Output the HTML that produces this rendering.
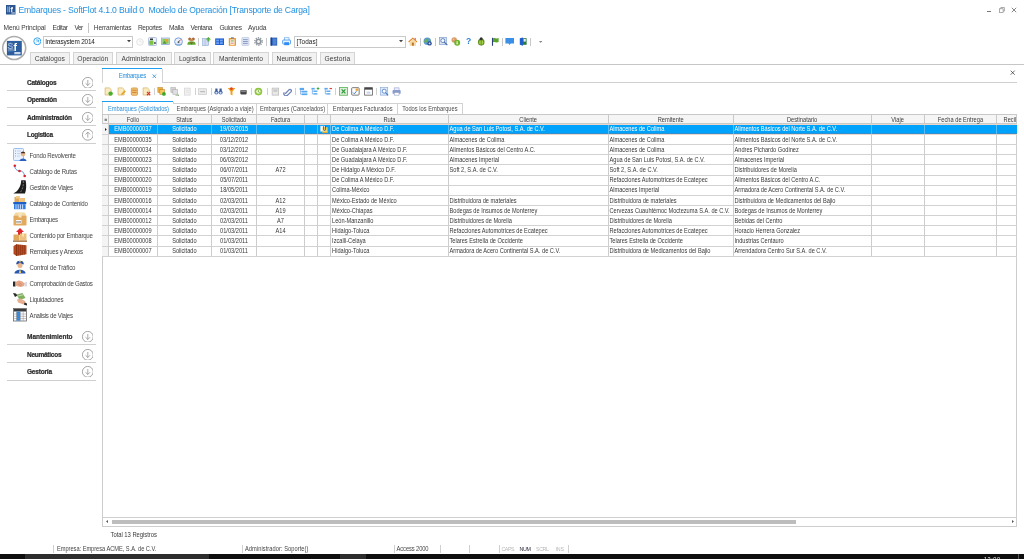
<!DOCTYPE html>
<html lang="es"><head><meta charset="utf-8"><title>Embarques - SoftFlot</title><style>
html,body{margin:0;padding:0;background:#fff;}
body{width:1024px;height:559px;position:relative;overflow:hidden;font-family:"Liberation Sans",sans-serif;}
#app{position:absolute;left:0;top:0;width:1024px;height:559px;overflow:hidden;will-change:transform;}
.t{position:absolute;white-space:pre;}
.r{position:absolute;display:block;}
.gb{-webkit-text-stroke:0.22px #2e2e2e;}
</style></head><body>
<div id="app">
<svg class="r" style="left:6.00px;top:5.00px" width="9.5" height="9.5" viewBox="0 0 9.5 9.5"><rect width="9.500" height="9.500" fill="#2a5590"/><path d="M1.300 1.600h1.100v5.600h-1.100zM3 1.600h1v5.600h-1z" fill="#b7c7e0" opacity=".8"/><text x="4.500" y="6.900" font-family="Liberation Sans, sans-serif" font-weight="bold" font-size="7.400" fill="#fff">f</text><rect x="5.300" y="7.300" width="3.600" height="1.400" fill="#aabbd8"/></svg>
<span class="t " style="left:18.50px;top:5.24px;font-size:8.60px;line-height:10.32px;color:#2291e0;letter-spacing:-0.173px;">Embarques - SoftFlot 4.1.0 Build 0  Modelo de Operación [Transporte de Carga]</span>
<div class="r" style="left:986.50px;top:11.20px;width:4.00px;height:0.80px;background:#777;"></div>
<svg class="r" style="left:998.50px;top:7.00px" width="6" height="6" viewBox="0 0 6 6"><rect x="0.5" y="1.8" width="3.6" height="3.6" fill="none" stroke="#888" stroke-width=".7"/><path d="M1.8 1.8V.5H5.4V4.1H4.1" fill="none" stroke="#888" stroke-width=".7"/></svg>
<svg class="r" style="left:1010.50px;top:7.00px" width="6" height="6" viewBox="0 0 6 6"><path d="M.8 .8L5.2 5.2M5.2 .8L.8 5.2" stroke="#666" stroke-width=".8"/></svg>
<span class="t " style="left:3.50px;top:24.24px;font-size:6.60px;line-height:7.92px;color:#3a3a3a;letter-spacing:-0.104px;">Menú Principal</span>
<span class="t " style="left:52.50px;top:24.24px;font-size:6.60px;line-height:7.92px;color:#3a3a3a;letter-spacing:-0.348px;">Editar</span>
<span class="t " style="left:74.50px;top:24.24px;font-size:6.60px;line-height:7.92px;color:#3a3a3a;letter-spacing:-0.600px;">Ver</span>
<span class="t " style="left:93.80px;top:24.24px;font-size:6.60px;line-height:7.92px;color:#3a3a3a;letter-spacing:-0.174px;">Herramientas</span>
<span class="t " style="left:138.00px;top:24.24px;font-size:6.60px;line-height:7.92px;color:#3a3a3a;letter-spacing:-0.397px;">Reportes</span>
<span class="t " style="left:169.00px;top:24.24px;font-size:6.60px;line-height:7.92px;color:#3a3a3a;letter-spacing:-0.193px;">Malla</span>
<span class="t " style="left:190.50px;top:24.24px;font-size:6.60px;line-height:7.92px;color:#3a3a3a;letter-spacing:-0.371px;">Ventana</span>
<span class="t " style="left:219.50px;top:24.24px;font-size:6.60px;line-height:7.92px;color:#3a3a3a;letter-spacing:-0.347px;">Guiones</span>
<span class="t " style="left:248.00px;top:24.24px;font-size:6.60px;line-height:7.92px;color:#3a3a3a;letter-spacing:-0.024px;">Ayuda</span>
<div class="r" style="left:88.20px;top:22.50px;width:0.70px;height:10.00px;background:#c4c4c4;"></div>
<svg class="r" style="left:1.00px;top:35.00px" width="27" height="26" viewBox="0 0 27 26"><circle cx="13.2" cy="13" r="11.500" fill="#fff" stroke="#adadad" stroke-width="1.600"/><rect x="5.900" y="5.900" width="14.900" height="14.500" fill="#2b5d9f"/><text x="6.400" y="14.200" font-family="Liberation Sans, sans-serif" font-size="8.600" fill="none" stroke="#b9cbe6" stroke-width=".45">S</text><path d="M7 14.800l5.800-.6M7 15.900l6-.3" stroke="#b9cbe6" stroke-width=".5"/><text x="12.600" y="15.600" font-family="Liberation Sans, sans-serif" font-weight="bold" font-size="10.500" fill="#fff">f</text><rect x="13.300" y="17" width="6.200" height="2.300" rx=".4" fill="#c9d6ea"/></svg>
<svg class="r" style="left:32.50px;top:37.20px" width="8.6" height="8.6" viewBox="0 0 8.6 8.6"><circle cx="4.3" cy="4.3" r="3.5" fill="#fff" stroke="#35a7f2" stroke-width="1"/><path d="M3 3h2.6v2.4M5.4 3.2L3.2 5.4" stroke="#35a7f2" stroke-width=".8" fill="none"/></svg>
<div class="r" style="left:43.00px;top:35.50px;width:90.00px;height:12.00px;background:#fff;box-sizing:border-box;border:0.8px solid #c9c9c9;"></div>
<span class="t " style="left:45.20px;top:37.56px;font-size:6.40px;line-height:7.68px;color:#222;letter-spacing:-0.178px;">Interasystem 2014</span>
<svg class="r" style="left:126.50px;top:40.40px" width="4" height="2.5" viewBox="0 0 4 2.5"><path d="M0 0h4L2 2.2z" fill="#444"/></svg>
<svg class="r" style="left:136.00px;top:37.50px" width="8" height="8" viewBox="0 0 8 8"><circle cx="4" cy="4" r="3.3" fill="#fbfbfb" stroke="#dcdcdc" stroke-width=".8"/><path d="M3 3h2v2" stroke="#ddd" stroke-width=".6" fill="none"/></svg>
<svg class="r" style="left:148.00px;top:37.00px" width="9" height="9" viewBox="0 0 9 9"><rect x=".5" y=".5" width="8" height="8" rx="1" fill="#eef3fb" stroke="#9ab0d6" stroke-width=".7"/><rect x="1.2" y="3.6" width="4.2" height="4.2" fill="#7cc344"/><rect x="2" y="1.5" width="3" height="1.6" fill="#333"/><rect x="6.3" y="5" width="1.3" height="2" fill="#333"/></svg>
<svg class="r" style="left:160.80px;top:37.00px" width="9" height="9" viewBox="0 0 9 9"><rect x=".4" y="1" width="8.2" height="6.6" fill="#dfe9f8" stroke="#7f9fd0" stroke-width=".7"/><rect x="1.3" y="1.9" width="6.4" height="4.8" fill="#8ec85a"/><circle cx="5.8" cy="3.4" r="1.3" fill="#f0a030"/><path d="M1.3 6.7L3.6 4l2 2.7z" fill="#4f9a3a"/></svg>
<svg class="r" style="left:173.80px;top:37.00px" width="9" height="9" viewBox="0 0 9 9"><circle cx="4.5" cy="4.7" r="3.9" fill="#e8f0fb" stroke="#6a9ad8" stroke-width=".9"/><path d="M4.5 5L6.6 2.6" stroke="#c33" stroke-width=".9"/><circle cx="4.5" cy="5.2" r=".9" fill="#555"/><path d="M1.6 7.3h5.8" stroke="#6a9ad8" stroke-width=".8"/></svg>
<svg class="r" style="left:186.50px;top:37.00px" width="9" height="9" viewBox="0 0 9 9"><circle cx="2.7" cy="2" r="1.5" fill="#a8683a"/><circle cx="6.3" cy="2" r="1.5" fill="#a8683a"/><circle cx="4.5" cy="3" r="1.6" fill="#c98a55"/><path d="M.3 7.8c0-2.4 1.4-3.4 2.4-3.4h3.6c1 0 2.4 1 2.4 3.4z" fill="#5cab2e"/><path d="M3 5.2l1.5 2.6L6 5.2z" fill="#8b5a33"/></svg>
<div class="r" style="left:198.40px;top:37.50px;width:0.70px;height:8.50px;background:#c8c8c8;"></div>
<svg class="r" style="left:202.00px;top:37.00px" width="9.5" height="9" viewBox="0 0 9.5 9"><rect x=".6" y="1.6" width="6" height="7" fill="#cfdcf2" stroke="#8fa8d4" stroke-width=".6"/><path d="M3.2 1.6v7" stroke="#a9bde0" stroke-width=".6"/><path d="M6.4 0l2.6 2.4H7.4v2H5.4v-2H3.8z" fill="#53b038"/></svg>
<svg class="r" style="left:215.00px;top:37.00px" width="9.2" height="9" viewBox="0 0 9.2 9"><rect x=".2" y="1.4" width="8.8" height="6.6" fill="#1f5fd0"/><rect x="1.2" y="2.6" width="2.8" height="1.8" fill="#6fa4f5"/><rect x="5" y="2.6" width="2.8" height="1.8" fill="#6fa4f5"/><rect x="1.2" y="5.2" width="2.8" height="1.8" fill="#6fa4f5"/><rect x="5" y="5.2" width="2.8" height="1.8" fill="#6fa4f5"/></svg>
<svg class="r" style="left:228.00px;top:37.00px" width="8.8" height="9" viewBox="0 0 8.8 9"><rect x=".8" y="1" width="7.2" height="7.8" rx=".6" fill="#e79a33"/><rect x="2.300" y="2.400" width="4.200" height="5.400" fill="#fff"/><rect x="3" y=".2" width="2.8" height="1.8" fill="#8a8a8a"/><path d="M3 3.4h2.8M3 4.8h2.8" stroke="#5a9a40" stroke-width=".6"/><path d="M3 6.3h2.8" stroke="#c44" stroke-width=".6"/></svg>
<svg class="r" style="left:241.00px;top:37.00px" width="8.8" height="9" viewBox="0 0 8.8 9"><rect x=".8" y=".5" width="7.2" height="8" rx="1" fill="#dfe6f4" stroke="#b3c0dc" stroke-width=".6"/><path d="M2 2.600h4.800M2 4.500h4.800M2 6.400h4.800" stroke="#8394bd" stroke-width=".9"/></svg>
<svg class="r" style="left:253.50px;top:37.00px" width="9" height="9" viewBox="0 0 9 9"><circle cx="4.5" cy="4.5" r="3.1" fill="#8d949c"/><circle cx="4.5" cy="4.5" r="3.8" fill="none" stroke="#8d949c" stroke-width="1.2" stroke-dasharray="1.3 1.1"/><circle cx="4.5" cy="4.5" r="1.5" fill="#f4f4f4"/></svg>
<div class="r" style="left:266.00px;top:37.50px;width:0.70px;height:8.50px;background:#c8c8c8;"></div>
<svg class="r" style="left:270.00px;top:37.00px" width="8" height="9" viewBox="0 0 8 9"><rect x=".6" y=".6" width="6.6" height="8" fill="#2f63b8"/><rect x=".6" y=".6" width="1.4" height="8" fill="#1c3f85"/><rect x="2.8" y="1.6" width="3.6" height="6" fill="#4f83d8"/></svg>
<svg class="r" style="left:282.00px;top:37.00px" width="9.2" height="9" viewBox="0 0 9.2 9"><rect x="2.400" y=".8" width="4.600" height="2.600" fill="#fff" stroke="#4a98ea" stroke-width=".6"/><rect x=".6" y="3" width="8" height="4" rx=".9" fill="#e6f1fd" stroke="#3b8fe8" stroke-width=".8"/><rect x="2.200" y="5.200" width="4.800" height="3" fill="#2f8cf0"/></svg>
<div class="r" style="left:294.00px;top:35.50px;width:111.50px;height:12.00px;background:#fff;box-sizing:border-box;border:0.8px solid #c9c9c9;"></div>
<span class="t " style="left:296.50px;top:37.56px;font-size:6.40px;line-height:7.68px;color:#222;letter-spacing:0.061px;">[Todas]</span>
<svg class="r" style="left:399.30px;top:40.40px" width="4" height="2.5" viewBox="0 0 4 2.5"><path d="M0 0h4L2 2.2z" fill="#444"/></svg>
<svg class="r" style="left:407.50px;top:37.00px" width="9.6" height="9" viewBox="0 0 9.6 9"><path d="M.2 4.6L4.8.5l4.6 4.1-.8.8L4.8 2 1 5.4z" fill="#e8801c"/><path d="M1.6 4.8L4.8 2l3.2 2.8v3.9H1.6z" fill="#f6d9a8"/><rect x="3.9" y="5.6" width="1.9" height="3.1" fill="#b7722c"/><rect x="6.6" y=".9" width="1.2" height="2" fill="#c66"/></svg>
<div class="r" style="left:419.80px;top:37.50px;width:0.70px;height:8.50px;background:#c8c8c8;"></div>
<svg class="r" style="left:423.00px;top:37.00px" width="9.5" height="9" viewBox="0 0 9.5 9"><circle cx="4.3" cy="4.2" r="3.7" fill="#5b97d6"/><path d="M2 2.5c1-.8 2.3-.2 2.5.8s-1 1.4-1.3 2.4S1.7 6 1.2 5" fill="#6ab344"/><path d="M5.5 1.3c1 .4 2 1.3 2.2 2.6-.8.2-1.6-.4-1.9-1.2z" fill="#6ab344"/><circle cx="6.6" cy="6.4" r="2.2" fill="#2b4f8f"/><path d="M5.6 6.4h2M6.6 5.4v2" stroke="#fff" stroke-width=".6"/></svg>
<div class="r" style="left:435.30px;top:37.50px;width:0.70px;height:8.50px;background:#c8c8c8;"></div>
<svg class="r" style="left:439.00px;top:37.00px" width="9" height="9" viewBox="0 0 9 9"><rect x=".5" y=".6" width="6.8" height="6.8" fill="#dbe6f6" stroke="#7f9fd0" stroke-width=".7"/><circle cx="3.8" cy="3.6" r="2" fill="#f4f8ff" stroke="#4a6ea8" stroke-width=".8"/><path d="M5.3 5.2l3 3" stroke="#4a6ea8" stroke-width="1.2"/></svg>
<svg class="r" style="left:451.00px;top:37.00px" width="9.6" height="9" viewBox="0 0 9.6 9"><circle cx="3.2" cy="3" r="2.7" fill="#d89a6a"/><circle cx="2.6" cy="2.4" r=".8" fill="#f0c39a"/><circle cx="6.2" cy="5.8" r="3" fill="#6fb52c"/><path d="M6.2 4.2v3.2M5.3 5h1.6M5.3 6.6h1.8" stroke="#fff" stroke-width=".6"/></svg>
<span class="t " style="left:466.00px;top:36.44px;font-size:8.60px;line-height:10.32px;color:#2f7fd6;font-weight:bold;">?</span>
<svg class="r" style="left:477.00px;top:37.00px" width="8.5" height="9" viewBox="0 0 8.5 9"><ellipse cx="4.2" cy="5" rx="3.3" ry="3.6" fill="#5f8f1e"/><ellipse cx="4.2" cy="5.4" rx="2.1" ry="2.4" fill="#a6d34a"/><circle cx="4.2" cy="1.7" r="1.5" fill="#333"/><path d="M4.2 2.8v5.6" stroke="#3e5f12" stroke-width=".6"/></svg>
<svg class="r" style="left:490.50px;top:37.00px" width="8" height="9" viewBox="0 0 8 9"><path d="M1.5.8v8" stroke="#2c3f7a" stroke-width="1.1"/><path d="M2 1.2c2-.9 3.200 1 5.600-.2v4c-2.400 1.200-3.600-.7-5.600.2z" fill="#5aa32a"/></svg>
<div class="r" style="left:502.00px;top:37.50px;width:0.70px;height:8.50px;background:#c8c8c8;"></div>
<svg class="r" style="left:505.30px;top:37.00px" width="9.4" height="9" viewBox="0 0 9.4 9"><path d="M.4 1h8.600v5.400H5.600L4.600 7.900 3.600 6.400H.4z" fill="#3b8fe6"/></svg>
<svg class="r" style="left:518.50px;top:37.00px" width="8" height="9" viewBox="0 0 8 9"><path d="M.8 1.200L4 0.400v8.400L.8 7.800z" fill="#1f5fc8"/><rect x="4" y="1.200" width="3.600" height="6.600" fill="#2b7a3a"/><rect x="4.600" y="2" width="2.200" height="2.600" fill="#e9f1fb"/></svg>
<div class="r" style="left:530.40px;top:37.50px;width:0.70px;height:8.50px;background:#c8c8c8;"></div>
<svg class="r" style="left:539.20px;top:40.60px" width="3.2" height="2.2" viewBox="0 0 3.2 2.2"><path d="M0 0h3.200L1.600 2z" fill="#8a8a8a"/></svg>
<div class="r" style="left:29.50px;top:52.00px;width:40.50px;height:12.40px;background:#f2f2f2;box-sizing:border-box;border:0.9px solid #d4d4d4;border-bottom:none;"></div>
<span class="t " style="left:34.66px;top:54.88px;font-size:6.70px;line-height:8.04px;color:#3f3f3f;">Catálogos</span>
<div class="r" style="left:72.50px;top:52.00px;width:40.50px;height:12.40px;background:#f2f2f2;box-sizing:border-box;border:0.9px solid #d4d4d4;border-bottom:none;"></div>
<span class="t " style="left:77.29px;top:54.88px;font-size:6.70px;line-height:8.04px;color:#3f3f3f;">Operación</span>
<div class="r" style="left:115.50px;top:52.00px;width:56.00px;height:12.40px;background:#f2f2f2;box-sizing:border-box;border:0.9px solid #d4d4d4;border-bottom:none;"></div>
<span class="t " style="left:121.53px;top:54.88px;font-size:6.70px;line-height:8.04px;color:#3f3f3f;">Administración</span>
<div class="r" style="left:173.80px;top:52.00px;width:37.00px;height:12.40px;background:#f2f2f2;box-sizing:border-box;border:0.9px solid #d4d4d4;border-bottom:none;"></div>
<span class="t " style="left:178.89px;top:54.88px;font-size:6.70px;line-height:8.04px;color:#3f3f3f;">Logística</span>
<div class="r" style="left:213.00px;top:52.00px;width:56.00px;height:12.40px;background:#f2f2f2;box-sizing:border-box;border:0.9px solid #d4d4d4;border-bottom:none;"></div>
<span class="t " style="left:219.03px;top:54.88px;font-size:6.70px;line-height:8.04px;color:#3f3f3f;">Mantenimiento</span>
<div class="r" style="left:271.50px;top:52.00px;width:45.50px;height:12.40px;background:#f2f2f2;box-sizing:border-box;border:0.9px solid #d4d4d4;border-bottom:none;"></div>
<span class="t " style="left:276.56px;top:54.88px;font-size:6.70px;line-height:8.04px;color:#3f3f3f;">Neumáticos</span>
<div class="r" style="left:319.80px;top:52.00px;width:35.20px;height:12.40px;background:#f2f2f2;box-sizing:border-box;border:0.9px solid #d4d4d4;border-bottom:none;"></div>
<span class="t " style="left:324.55px;top:54.88px;font-size:6.70px;line-height:8.04px;color:#3f3f3f;">Gestoría</span>
<div class="r" style="left:0.00px;top:64.00px;width:1024.00px;height:0.80px;background:#c6c6c6;"></div>
<span class="t gb" style="left:27.00px;top:78.80px;font-size:6.50px;line-height:7.80px;color:#2e2e2e;letter-spacing:-0.228px;font-weight:bold;transform:scaleY(1.080);">Catálogos</span>
<svg class="r" style="left:81.70px;top:76.50px" width="11.6" height="11.6" viewBox="0 0 11.6 11.6"><circle cx="5.800" cy="5.800" r="5.400" fill="#fff" stroke="#8e8e8e" stroke-width=".8"/><path d="M5.8 3v5.400M3.500 6.200L5.800 8.500 8.100 6.200" fill="none" stroke="#8e8e8e" stroke-width=".75"/></svg>
<div class="r" style="left:7.00px;top:90.00px;width:88.50px;height:0.80px;background:#cfcfcf;"></div>
<span class="t gb" style="left:27.00px;top:96.30px;font-size:6.50px;line-height:7.80px;color:#2e2e2e;letter-spacing:-0.269px;font-weight:bold;transform:scaleY(1.080);">Operación</span>
<svg class="r" style="left:81.70px;top:94.00px" width="11.6" height="11.6" viewBox="0 0 11.6 11.6"><circle cx="5.800" cy="5.800" r="5.400" fill="#fff" stroke="#8e8e8e" stroke-width=".8"/><path d="M5.8 3v5.400M3.500 6.200L5.800 8.500 8.100 6.200" fill="none" stroke="#8e8e8e" stroke-width=".75"/></svg>
<div class="r" style="left:7.00px;top:107.40px;width:88.50px;height:0.80px;background:#cfcfcf;"></div>
<span class="t gb" style="left:27.00px;top:113.80px;font-size:6.50px;line-height:7.80px;color:#2e2e2e;letter-spacing:-0.178px;font-weight:bold;transform:scaleY(1.080);">Administración</span>
<svg class="r" style="left:81.70px;top:111.50px" width="11.6" height="11.6" viewBox="0 0 11.6 11.6"><circle cx="5.800" cy="5.800" r="5.400" fill="#fff" stroke="#8e8e8e" stroke-width=".8"/><path d="M5.8 3v5.400M3.500 6.200L5.800 8.500 8.100 6.200" fill="none" stroke="#8e8e8e" stroke-width=".75"/></svg>
<div class="r" style="left:7.00px;top:125.00px;width:88.50px;height:0.80px;background:#cfcfcf;"></div>
<span class="t gb" style="left:27.00px;top:131.40px;font-size:6.50px;line-height:7.80px;color:#2e2e2e;letter-spacing:-0.317px;font-weight:bold;transform:scaleY(1.080);">Logistica</span>
<svg class="r" style="left:81.70px;top:129.10px" width="11.6" height="11.6" viewBox="0 0 11.6 11.6"><circle cx="5.800" cy="5.800" r="5.400" fill="#fff" stroke="#8e8e8e" stroke-width=".8"/><path d="M5.800 8.600V3.200M3.500 5.400L5.800 3.100 8.100 5.400" fill="none" stroke="#8e8e8e" stroke-width=".75"/></svg>
<div class="r" style="left:7.00px;top:142.50px;width:88.50px;height:0.80px;background:#cfcfcf;"></div>
<span class="t gb" style="left:27.00px;top:333.20px;font-size:6.50px;line-height:7.80px;color:#2e2e2e;letter-spacing:-0.030px;font-weight:bold;transform:scaleY(1.080);">Mantenimiento</span>
<svg class="r" style="left:81.70px;top:330.90px" width="11.6" height="11.6" viewBox="0 0 11.6 11.6"><circle cx="5.800" cy="5.800" r="5.400" fill="#fff" stroke="#8e8e8e" stroke-width=".8"/><path d="M5.8 3v5.400M3.500 6.200L5.800 8.500 8.100 6.200" fill="none" stroke="#8e8e8e" stroke-width=".75"/></svg>
<div class="r" style="left:7.00px;top:344.40px;width:88.50px;height:0.80px;background:#cfcfcf;"></div>
<span class="t gb" style="left:27.00px;top:350.80px;font-size:6.50px;line-height:7.80px;color:#2e2e2e;letter-spacing:-0.261px;font-weight:bold;transform:scaleY(1.080);">Neumáticos</span>
<svg class="r" style="left:81.70px;top:348.50px" width="11.6" height="11.6" viewBox="0 0 11.6 11.6"><circle cx="5.800" cy="5.800" r="5.400" fill="#fff" stroke="#8e8e8e" stroke-width=".8"/><path d="M5.8 3v5.400M3.500 6.200L5.800 8.500 8.100 6.200" fill="none" stroke="#8e8e8e" stroke-width=".75"/></svg>
<div class="r" style="left:7.00px;top:362.00px;width:88.50px;height:0.80px;background:#cfcfcf;"></div>
<span class="t gb" style="left:27.00px;top:368.20px;font-size:6.50px;line-height:7.80px;color:#2e2e2e;letter-spacing:-0.196px;font-weight:bold;transform:scaleY(1.080);">Gestoría</span>
<svg class="r" style="left:81.70px;top:365.90px" width="11.6" height="11.6" viewBox="0 0 11.6 11.6"><circle cx="5.800" cy="5.800" r="5.400" fill="#fff" stroke="#8e8e8e" stroke-width=".8"/><path d="M5.8 3v5.400M3.500 6.200L5.800 8.500 8.100 6.200" fill="none" stroke="#8e8e8e" stroke-width=".75"/></svg>
<div class="r" style="left:7.00px;top:379.50px;width:88.50px;height:0.80px;background:#cfcfcf;"></div>
<span class="t " style="left:29.60px;top:151.54px;font-size:6.10px;line-height:7.32px;color:#444;letter-spacing:-0.207px;transform:scaleY(1.100);">Fondo Revolvente</span>
<svg class="r" style="left:13.30px;top:147.90px" width="14" height="14" viewBox="0 0 14 14"><rect x=".5" y=".5" width="10" height="12" rx="1" fill="#eaf2ff" stroke="#7fb0f0" stroke-width=".8"/><path d="M2 3h1M2 5.500h1M2 8h1" stroke="#e8a030" stroke-width="1"/><path d="M4 3h4M4 5.500h3M4 8h3" stroke="#b0c4e4" stroke-width=".7"/><circle cx="10" cy="6" r="2.400" fill="#e8b48a"/><path d="M7.800 5.200c0-2 4.400-2 4.400 0z" fill="#3a2a20"/><path d="M6.500 13c0-3.500 7-3.500 7 0z" fill="#2a5fc0"/></svg>
<span class="t " style="left:29.60px;top:167.54px;font-size:6.10px;line-height:7.32px;color:#444;letter-spacing:-0.196px;transform:scaleY(1.100);">Catálogo de Rutas</span>
<svg class="r" style="left:13.30px;top:163.90px" width="14" height="14" viewBox="0 0 14 14"><path d="M1.500 1.500C2 6 5 7 7 7s4 1 4.500 5" fill="none" stroke="#4a90e0" stroke-width="1"/><circle cx="1.800" cy="1.800" r="1.300" fill="#e0202a"/><circle cx="6.500" cy="7" r="1.300" fill="#e0202a"/><circle cx="11.700" cy="12" r="1.300" fill="#e0202a"/></svg>
<span class="t " style="left:29.60px;top:183.54px;font-size:6.10px;line-height:7.32px;color:#444;letter-spacing:-0.269px;transform:scaleY(1.100);">Gestión de Viajes</span>
<svg class="r" style="left:13.30px;top:179.90px" width="14" height="14" viewBox="0 0 14 14"><path d="M.3 13.600C5 11.500 8.200 6 8.200.3h4.400c1 4.500.8 9.500-.6 13.300z" fill="#1c1c1c"/><path d="M10.300 1c.5 4.500-.8 9-3.800 12.400" stroke="#9a9a9a" stroke-width=".7" stroke-dasharray="2 1.200" fill="none"/></svg>
<span class="t " style="left:29.60px;top:199.54px;font-size:6.10px;line-height:7.32px;color:#444;letter-spacing:-0.200px;transform:scaleY(1.100);">Catálogo de Contenido</span>
<svg class="r" style="left:13.30px;top:195.90px" width="14" height="14" viewBox="0 0 14 14"><rect x="1.500" y="1" width="5" height="5" fill="#e0a85a"/><rect x="6.500" y="2" width="5.500" height="4.500" fill="#eec27e"/><rect x="3" y="0" width="4" height="2.500" fill="#f0c98a"/><rect x=".3" y="6" width="13" height="2.200" fill="#1f5fc8"/><rect x="1" y="8.200" width="11.600" height="5" fill="#2f7ae0"/><path d="M3 8.500v4.400M5.200 8.500v4.400M7.400 8.500v4.400M9.600 8.500v4.400" stroke="#d8e8ff" stroke-width=".9"/></svg>
<span class="t " style="left:29.60px;top:215.54px;font-size:6.10px;line-height:7.32px;color:#444;letter-spacing:-0.349px;transform:scaleY(1.100);">Embarques</span>
<svg class="r" style="left:13.30px;top:211.90px" width="14" height="14" viewBox="0 0 14 14"><path d="M.5 3.500L2.500.5h9l2 3z" fill="#f3d9a0"/><rect x=".5" y="3.500" width="13" height="10" rx=".8" fill="#e3aa5e"/><rect x="5.500" y=".5" width="3" height="5" fill="#f6e6c0"/><rect x="3" y="8" width="5.500" height="3.600" fill="#fff"/><path d="M3.800 9v1.800M5 9v1.800M6.200 9v1.800M7.400 9v1.800" stroke="#333" stroke-width=".5"/></svg>
<span class="t " style="left:29.60px;top:231.54px;font-size:6.10px;line-height:7.32px;color:#444;letter-spacing:-0.227px;transform:scaleY(1.100);">Contenido por Embarque</span>
<svg class="r" style="left:13.30px;top:227.90px" width="14" height="14" viewBox="0 0 14 14"><path d="M7 0l4 4H9v3H5V4H3z" fill="#e0262c"/><rect x=".5" y="6.500" width="6" height="6" fill="#e0a85a"/><rect x="7" y="5.500" width="6.500" height="7" fill="#eec27e"/><rect x="9.300" y="5.500" width="1.600" height="3" fill="#f8e8c4"/><path d="M0 12.500h14v1.300H0z" fill="#a06a30"/></svg>
<span class="t " style="left:29.60px;top:247.54px;font-size:6.10px;line-height:7.32px;color:#444;letter-spacing:-0.230px;transform:scaleY(1.100);">Remolques y Anexos</span>
<svg class="r" style="left:13.30px;top:242.90px" width="14" height="14" viewBox="0 0 14 14"><path d="M.5 3L3.500 1.200 13.500 2.200v9L3.500 13 .5 11z" fill="#b8481c"/><path d="M3.500 1.200V13" stroke="#7a2c0e" stroke-width=".7"/><path d="M5.500 1.800v10.600M7.500 2v10.200M9.500 2.200v9.800M11.500 2.300v9.400" stroke="#8c3412" stroke-width=".6"/></svg>
<span class="t " style="left:29.60px;top:263.54px;font-size:6.10px;line-height:7.32px;color:#444;letter-spacing:-0.132px;transform:scaleY(1.100);">Control de Tráfico</span>
<svg class="r" style="left:13.30px;top:259.90px" width="14" height="14" viewBox="0 0 14 14"><path d="M3.500 3c0-3 7-3 7 0l.5 1.200h-8z" fill="#2a4fa0"/><circle cx="7" cy="5.500" r="2.500" fill="#e8b48a"/><path d="M1.500 13.500c0-5 11-5 11 0z" fill="#2a57b0"/><path d="M7 8.500l1.200 4.500H5.800z" fill="#e8d050"/><rect x="6.300" y="1" width="1.400" height="1.400" fill="#f0d040"/></svg>
<span class="t " style="left:29.60px;top:279.54px;font-size:6.10px;line-height:7.32px;color:#444;letter-spacing:-0.275px;transform:scaleY(1.100);">Comprobación de Gastos</span>
<svg class="r" style="left:13.30px;top:275.90px" width="14" height="14" viewBox="0 0 14 14"><path d="M0 5.500h2.500v5H0z" fill="#2a2a2a"/><path d="M2.500 6l3-1.500 3 .5 3.500 2.500-1 2.500-3 1-3-.5-2.500-1z" fill="#e6a888"/><path d="M6 6.500l3 2.500M5 7.800l3 2.200" stroke="#b87858" stroke-width=".5"/><path d="M11.500 6.500l2.500-.8v4.500l-2.500.3z" fill="#d8d8e0"/></svg>
<span class="t " style="left:29.60px;top:295.54px;font-size:6.10px;line-height:7.32px;color:#444;letter-spacing:-0.284px;transform:scaleY(1.100);">Liquidaciones</span>
<svg class="r" style="left:13.30px;top:291.90px" width="14" height="14" viewBox="0 0 14 14"><path d="M0 1l3 .5 1.500 2L2 5z" fill="#2a2a2a"/><path d="M3.500 2.500l6-1.500 3 5-6 2z" fill="#7fb060"/><path d="M5 4l5.500-1.300" stroke="#dfeccf" stroke-width=".7"/><path d="M4 7.500l3.500-1 4.500 2.500 1 3-2.500.5-5.500-2z" fill="#e6b090"/><path d="M11.500 10.500l2.500 1v2l-3-.8z" fill="#2a2a2a"/></svg>
<span class="t " style="left:29.60px;top:311.54px;font-size:6.10px;line-height:7.32px;color:#444;letter-spacing:-0.253px;transform:scaleY(1.100);">Analisis de Viajes</span>
<svg class="r" style="left:13.30px;top:307.90px" width="14" height="14" viewBox="0 0 14 14"><rect x=".5" y=".5" width="13" height="12.500" fill="#fff" stroke="#666" stroke-width=".8"/><rect x=".9" y=".9" width="12.200" height="2.600" fill="#3a3a3a"/><rect x="3.500" y="3.500" width="3.800" height="9.200" fill="#2a8ae8"/><path d="M.9 6h12.200M.9 8.300h12.200M.9 10.600h12.200M3.500 3.500v9.300M7.300 3.500v9.300M10.200 3.500v9.300" stroke="#888" stroke-width=".5" fill="none"/></svg>
<div class="r" style="left:102.40px;top:68.40px;width:59.60px;height:1.10px;background:#1e9ef0;"></div>
<div class="r" style="left:102.40px;top:69.00px;width:0.80px;height:14.00px;background:#d4d4d4;"></div>
<div class="r" style="left:161.60px;top:69.00px;width:0.80px;height:13.60px;background:#d4d4d4;"></div>
<div class="r" style="left:162.00px;top:82.00px;width:855.00px;height:0.80px;background:#cfcfcf;"></div>
<span class="t " style="left:118.80px;top:72.70px;font-size:6.00px;line-height:7.20px;color:#2b8fd8;letter-spacing:-0.398px;transform:scaleY(1.100);">Embarques</span>
<svg class="r" style="left:152.00px;top:73.90px" width="4.6" height="4.6" viewBox="0 0 4.6 4.6"><path d="M.5 .5L4.100 4.100M4.100 .5L.5 4.100" stroke="#2b8fd8" stroke-width=".8"/></svg>
<svg class="r" style="left:1010.30px;top:69.70px" width="5.4" height="5.4" viewBox="0 0 5.4 5.4"><path d="M.7 .7L4.700 4.700M4.700 .7L.7 4.700" stroke="#444" stroke-width=".8"/></svg>
<svg class="r" style="left:104.30px;top:87.10px" width="8.8" height="8.8" viewBox="0 0 8 8"><path d="M1 .8h4l1.500 1.500v5H1z" fill="#f8ebc2" stroke="#d4aa58" stroke-width=".6"/><circle cx="6" cy="6" r="2" fill="#4cae2c"/></svg>
<svg class="r" style="left:117.20px;top:87.10px" width="8.8" height="8.8" viewBox="0 0 8 8"><path d="M1 .8h4l1.500 1.500v5H1z" fill="#f8ebc2" stroke="#d4aa58" stroke-width=".6"/><path d="M3.500 6.500l3.500-3.500 1 1-3.500 3.500z" fill="#e8a020"/></svg>
<svg class="r" style="left:129.60px;top:87.10px" width="8.8" height="8.8" viewBox="0 0 8 8"><rect x="1.200" y=".8" width="5.600" height="6.800" rx="1" fill="#f0c070" stroke="#d08a2a" stroke-width=".6"/><path d="M2 3h4M2 5h4" stroke="#c87820" stroke-width=".7"/></svg>
<svg class="r" style="left:141.90px;top:87.10px" width="8.8" height="8.8" viewBox="0 0 8 8"><path d="M1 .8h4l1.500 1.500v5H1z" fill="#f8ebc2" stroke="#d4aa58" stroke-width=".6"/><path d="M4.500 4.500l3 3M7.500 4.500l-3 3" stroke="#e03030" stroke-width="1"/></svg>
<div class="r" style="left:153.60px;top:87.80px;width:0.70px;height:7.60px;background:#d0d0d0;"></div>
<svg class="r" style="left:157.30px;top:87.10px" width="8.8" height="8.8" viewBox="0 0 8 8"><rect x=".8" y=".6" width="4.200" height="4.200" fill="#f0b040" stroke="#c07a1a" stroke-width=".5"/><rect x="2.600" y="2.400" width="4.200" height="4.200" fill="#f6c860" stroke="#c07a1a" stroke-width=".5"/><circle cx="6.300" cy="6.300" r="1.700" fill="#3aa82a"/></svg>
<svg class="r" style="left:170.00px;top:87.10px" width="8.8" height="8.8" viewBox="0 0 8 8"><rect x=".8" y=".6" width="4.200" height="4.200" fill="#d4d4d4" stroke="#a8a8a8" stroke-width=".5"/><rect x="2.600" y="2.400" width="4.200" height="4.200" fill="#e0e0e0" stroke="#a8a8a8" stroke-width=".5"/><path d="M5 7.500h3M6.800 6.300L8 7.500 6.800 8.700" stroke="#6a9a5a" stroke-width=".6" fill="none"/></svg>
<svg class="r" style="left:182.60px;top:87.10px" width="8.8" height="8.8" viewBox="0 0 8 8"><rect x="1.500" y="1" width="5" height="6.400" fill="#f2f2f2" stroke="#cfcfcf" stroke-width=".6"/><path d="M2.500 3h3M2.500 4.800h3" stroke="#d8d8d8" stroke-width=".6"/></svg>
<div class="r" style="left:194.70px;top:87.80px;width:0.70px;height:7.60px;background:#d0d0d0;"></div>
<svg class="r" style="left:198.00px;top:87.10px" width="8.8" height="8.8" viewBox="0 0 8 8"><rect x=".6" y="1.600" width="7" height="5.200" fill="#ececec" stroke="#c4c4c4" stroke-width=".6"/><path d="M2 4.200h4.400" stroke="#bdbdbd" stroke-width="1.200"/></svg>
<div class="r" style="left:210.50px;top:87.80px;width:0.70px;height:7.60px;background:#d0d0d0;"></div>
<svg class="r" style="left:213.70px;top:87.10px" width="9.24" height="8.8" viewBox="0 0 8.4 8"><circle cx="2.200" cy="5" r="1.900" fill="#5a7ab8"/><circle cx="6" cy="5" r="1.900" fill="#5a7ab8"/><rect x="1.200" y="1.400" width="2" height="3" fill="#3a5a98"/><rect x="5" y="1.400" width="2" height="3" fill="#3a5a98"/><circle cx="2.200" cy="5.200" r=".9" fill="#cfe0ff"/><circle cx="6" cy="5.200" r=".9" fill="#cfe0ff"/></svg>
<svg class="r" style="left:226.50px;top:87.10px" width="8.8" height="8.8" viewBox="0 0 8 8"><path d="M.6 1h7L5 4.200v3.600L3.200 6.800V4.200z" fill="#f0a020"/><circle cx="4" cy="1.600" r="1.300" fill="#e04818"/></svg>
<svg class="r" style="left:239.00px;top:87.10px" width="8.8" height="8.8" viewBox="0 0 8 8"><path d="M1.200 3h5.800v2.600c0 .8-.6 1.200-1.400 1.200h-3c-.8 0-1.400-.4-1.400-1.200z" fill="#444"/><path d="M2 4.200h4.200" stroke="#bbb" stroke-width=".6"/></svg>
<div class="r" style="left:250.80px;top:87.80px;width:0.70px;height:7.60px;background:#d0d0d0;"></div>
<svg class="r" style="left:254.40px;top:87.10px" width="9.24" height="8.8" viewBox="0 0 8.4 8"><circle cx="4" cy="4.200" r="3.500" fill="#8cc63e"/><circle cx="4" cy="4.200" r="2" fill="#eaf6d0"/><path d="M4 2.800v1.600l1.200.7" stroke="#5a8a1e" stroke-width=".6" fill="none"/></svg>
<div class="r" style="left:266.90px;top:87.80px;width:0.70px;height:7.60px;background:#d0d0d0;"></div>
<svg class="r" style="left:270.80px;top:87.10px" width="8.8" height="8.8" viewBox="0 0 8 8"><rect x="1" y="1" width="6" height="6.400" fill="#e8e8e8" stroke="#b4b4b4" stroke-width=".6"/><rect x="2.200" y="2.200" width="3.600" height="2.200" fill="#c8c8c8"/></svg>
<svg class="r" style="left:283.00px;top:87.10px" width="8.8" height="8.8" viewBox="0 0 8 8"><path d="M2 6.200l3.600-3.800a1.300 1.300 0 0 1 1.800 1.800L4 7.600a2 2 0 0 1-2.800-2.800" fill="none" stroke="#6d82b8" stroke-width="1.200"/></svg>
<div class="r" style="left:295.40px;top:87.80px;width:0.70px;height:7.60px;background:#d0d0d0;"></div>
<svg class="r" style="left:299.00px;top:87.10px" width="9.46" height="8.8" viewBox="0 0 8.6 8"><rect x=".6" y=".8" width="4" height="2" fill="#58a8f0"/><rect x="2.600" y="3.400" width="5" height="1.600" fill="#58a8f0"/><rect x="2.600" y="5.800" width="5" height="1.600" fill="#58a8f0"/><path d="M1.500 2.800v3.800h1.100M1.500 4.200h1.100" stroke="#3a7ac8" stroke-width=".5" fill="none"/></svg>
<svg class="r" style="left:311.20px;top:87.10px" width="8.8" height="8.8" viewBox="0 0 8 8"><rect x=".4" y=".8" width="3" height="1.500" fill="#58a8f0"/><rect x="2.200" y="3.200" width="3.600" height="1.300" fill="#58a8f0"/><rect x="2.200" y="5.600" width="3.600" height="1.300" fill="#58a8f0"/><path d="M1.200 2.300v4h1M1.200 3.900h1" stroke="#3a8ae0" stroke-width=".5" fill="none"/><path d="M5.200 1.400h2.400M6.400 .2v2.400" stroke="#3aa83a" stroke-width=".9"/></svg>
<svg class="r" style="left:323.50px;top:87.10px" width="8.8" height="8.8" viewBox="0 0 8 8"><rect x=".4" y=".8" width="3" height="1.500" fill="#58a8f0"/><rect x="2.200" y="3.200" width="3.600" height="1.300" fill="#58a8f0"/><rect x="2.200" y="5.600" width="3.600" height="1.300" fill="#58a8f0"/><path d="M1.200 2.300v4h1M1.200 3.900h1" stroke="#3a8ae0" stroke-width=".5" fill="none"/><path d="M5 1.400h2.600" stroke="#e04040" stroke-width="1.100"/></svg>
<div class="r" style="left:335.30px;top:87.80px;width:0.70px;height:7.60px;background:#d0d0d0;"></div>
<svg class="r" style="left:339.00px;top:87.10px" width="9.02" height="8.8" viewBox="0 0 8.2 8"><rect x=".5" y=".5" width="7.200" height="7" fill="#dcefd6" stroke="#62b862" stroke-width=".8"/><path d="M2.400 2.200l3.400 3.600M5.800 2.200L2.400 5.800" stroke="#2c9a3c" stroke-width="1.100"/></svg>
<svg class="r" style="left:351.30px;top:87.10px" width="8.8" height="8.8" viewBox="0 0 8 8"><rect x=".6" y=".6" width="6.800" height="6.800" rx=".8" fill="#fff" stroke="#555" stroke-width=".7"/><rect x="4.200" y="1.400" width="2.400" height="2" fill="#f0a020"/><path d="M1.800 5l1.200 1.200 2-2.400" stroke="#2a6ad0" stroke-width=".8" fill="none"/></svg>
<svg class="r" style="left:363.60px;top:87.10px" width="9.02" height="8.8" viewBox="0 0 8.2 8"><rect x=".6" y=".6" width="7" height="6.800" fill="#fff" stroke="#555" stroke-width=".7"/><rect x=".6" y=".6" width="7" height="1.800" fill="#444"/><path d="M2.400 4.200h3.400v1.800H2.400z" fill="#c8d4e8"/></svg>
<div class="r" style="left:376.30px;top:87.80px;width:0.70px;height:7.60px;background:#d0d0d0;"></div>
<svg class="r" style="left:380.30px;top:87.10px" width="8.8" height="8.8" viewBox="0 0 8 8"><rect x=".6" y=".6" width="6.400" height="6.800" fill="#dfeaf8" stroke="#8aa8d8" stroke-width=".6"/><circle cx="3.800" cy="3.800" r="1.800" fill="#fff" stroke="#3a78c8" stroke-width=".7"/><path d="M5 5.200l2.400 2.400" stroke="#3a78c8" stroke-width="1"/></svg>
<svg class="r" style="left:392.30px;top:87.10px" width="9.24" height="8.8" viewBox="0 0 8.4 8"><rect x="2" y=".8" width="4.400" height="2.400" fill="#eef" stroke="#8a98c0" stroke-width=".5"/><rect x=".5" y="2.800" width="7.400" height="3.400" rx=".8" fill="#8a9ccc"/><rect x="2" y="5" width="4.400" height="2.400" fill="#fff" stroke="#8a98c0" stroke-width=".5"/></svg>
<div class="r" style="left:102.40px;top:101.00px;width:70.80px;height:1.10px;background:#1e9ef0;"></div>
<div class="r" style="left:102.40px;top:101.60px;width:0.80px;height:13.00px;background:#cfcfcf;"></div>
<div class="r" style="left:172.80px;top:101.60px;width:0.80px;height:12.60px;background:#cfcfcf;"></div>
<span class="t " style="left:108.00px;top:106.15px;font-size:5.75px;line-height:6.90px;color:#2b8fd8;letter-spacing:-0.075px;transform:scaleY(1.120);">Embarques (Solicitados)</span>
<div class="r" style="left:173.20px;top:103.30px;width:83.80px;height:10.90px;background:#fff;box-sizing:border-box;border:0.8px solid #d2d2d2;border-bottom:none;border-left:none;"></div>
<span class="t " style="left:176.59px;top:106.25px;font-size:5.75px;line-height:6.90px;color:#4a4a4a;transform:scaleY(1.120);">Embarques (Asignado a viaje)</span>
<div class="r" style="left:257.00px;top:103.30px;width:71.00px;height:10.90px;background:#fff;box-sizing:border-box;border:0.8px solid #d2d2d2;border-bottom:none;border-left:none;"></div>
<span class="t " style="left:259.90px;top:106.25px;font-size:5.75px;line-height:6.90px;color:#4a4a4a;transform:scaleY(1.120);">Embarques (Cancelados)</span>
<div class="r" style="left:328.00px;top:103.30px;width:69.50px;height:10.90px;background:#fff;box-sizing:border-box;border:0.8px solid #d2d2d2;border-bottom:none;border-left:none;"></div>
<span class="t " style="left:332.87px;top:106.25px;font-size:5.75px;line-height:6.90px;color:#4a4a4a;transform:scaleY(1.120);">Embarques Facturados</span>
<div class="r" style="left:397.50px;top:103.30px;width:65.00px;height:10.90px;background:#fff;box-sizing:border-box;border:0.8px solid #d2d2d2;border-bottom:none;border-left:none;"></div>
<span class="t " style="left:402.35px;top:106.25px;font-size:5.75px;line-height:6.90px;color:#4a4a4a;transform:scaleY(1.120);">Todos los Embarques</span>
<div class="r" style="left:102.40px;top:114.20px;width:914.80px;height:412.60px;background:#fff;box-sizing:border-box;border:0.8px solid #cdcdcd;"></div>
<div class="r" style="left:102.40px;top:114.20px;width:914.80px;height:10.00px;background:#f5f5f5;box-sizing:border-box;border:0.8px solid #c9c9c9;"></div>
<div class="r" style="left:108.10px;top:114.20px;width:0.80px;height:10.00px;background:#c9c9c9;"></div>
<div class="r" style="left:156.90px;top:114.20px;width:0.80px;height:10.00px;background:#c9c9c9;"></div>
<div class="r" style="left:211.10px;top:114.20px;width:0.80px;height:10.00px;background:#c9c9c9;"></div>
<div class="r" style="left:256.10px;top:114.20px;width:0.80px;height:10.00px;background:#c9c9c9;"></div>
<div class="r" style="left:304.20px;top:114.20px;width:0.80px;height:10.00px;background:#c9c9c9;"></div>
<div class="r" style="left:317.20px;top:114.20px;width:0.80px;height:10.00px;background:#c9c9c9;"></div>
<div class="r" style="left:330.40px;top:114.20px;width:0.80px;height:10.00px;background:#c9c9c9;"></div>
<div class="r" style="left:447.80px;top:114.20px;width:0.80px;height:10.00px;background:#c9c9c9;"></div>
<div class="r" style="left:607.80px;top:114.20px;width:0.80px;height:10.00px;background:#c9c9c9;"></div>
<div class="r" style="left:732.80px;top:114.20px;width:0.80px;height:10.00px;background:#c9c9c9;"></div>
<div class="r" style="left:870.60px;top:114.20px;width:0.80px;height:10.00px;background:#c9c9c9;"></div>
<div class="r" style="left:923.90px;top:114.20px;width:0.80px;height:10.00px;background:#c9c9c9;"></div>
<div class="r" style="left:996.30px;top:114.20px;width:0.80px;height:10.00px;background:#c9c9c9;"></div>
<span class="t " style="left:126.72px;top:116.88px;font-size:5.70px;line-height:6.84px;color:#3c3c3c;transform:scaleY(1.120);">Folio</span>
<span class="t " style="left:176.32px;top:116.88px;font-size:5.70px;line-height:6.84px;color:#3c3c3c;transform:scaleY(1.120);">Status</span>
<span class="t " style="left:221.64px;top:116.88px;font-size:5.70px;line-height:6.84px;color:#3c3c3c;transform:scaleY(1.120);">Solicitado</span>
<span class="t " style="left:270.89px;top:116.88px;font-size:5.70px;line-height:6.84px;color:#3c3c3c;transform:scaleY(1.120);">Factura</span>
<span class="t " style="left:383.48px;top:116.88px;font-size:5.70px;line-height:6.84px;color:#3c3c3c;transform:scaleY(1.120);">Ruta</span>
<span class="t " style="left:519.33px;top:116.88px;font-size:5.70px;line-height:6.84px;color:#3c3c3c;transform:scaleY(1.120);">Cliente</span>
<span class="t " style="left:657.71px;top:116.88px;font-size:5.70px;line-height:6.84px;color:#3c3c3c;transform:scaleY(1.120);">Remitente</span>
<span class="t " style="left:786.89px;top:116.88px;font-size:5.70px;line-height:6.84px;color:#3c3c3c;transform:scaleY(1.120);">Destinatario</span>
<span class="t " style="left:891.36px;top:116.88px;font-size:5.70px;line-height:6.84px;color:#3c3c3c;transform:scaleY(1.120);">Viaje</span>
<span class="t " style="left:937.84px;top:116.88px;font-size:5.70px;line-height:6.84px;color:#3c3c3c;transform:scaleY(1.120);">Fecha de Entrega</span>
<span class="t " style="left:1003.60px;top:116.88px;font-size:5.70px;line-height:6.84px;color:#3c3c3c;transform:scaleY(1.120);">Recil</span>
<svg class="r" style="left:103.50px;top:117.70px" width="3.6" height="3.6" viewBox="0 0 3.6 3.6"><circle cx="1.800" cy="1.800" r="1.400" fill="#8a8a8a"/></svg>
<div class="r" style="left:102.40px;top:124.20px;width:6.10px;height:132.00px;background:#f4f4f4;"></div>
<div class="r" style="left:108.50px;top:124.20px;width:908.70px;height:10.15px;background:#00a3fc;box-sizing:border-box;border-top:0.7px solid #2f8fcf;border-bottom:0.7px solid #2f8fcf;"></div>
<div class="r" style="left:102.40px;top:133.95px;width:914.80px;height:0.80px;background:#d2d2d2;"></div>
<div class="r" style="left:108.50px;top:134.25px;width:908.70px;height:0.60px;background:#ead8cc;"></div>
<div class="r" style="left:102.40px;top:144.11px;width:914.80px;height:0.80px;background:#d2d2d2;"></div>
<div class="r" style="left:102.40px;top:154.26px;width:914.80px;height:0.80px;background:#d2d2d2;"></div>
<div class="r" style="left:102.40px;top:164.42px;width:914.80px;height:0.80px;background:#d2d2d2;"></div>
<div class="r" style="left:102.40px;top:174.57px;width:914.80px;height:0.80px;background:#d2d2d2;"></div>
<div class="r" style="left:102.40px;top:184.72px;width:914.80px;height:0.80px;background:#d2d2d2;"></div>
<div class="r" style="left:102.40px;top:194.88px;width:914.80px;height:0.80px;background:#d2d2d2;"></div>
<div class="r" style="left:102.40px;top:205.03px;width:914.80px;height:0.80px;background:#d2d2d2;"></div>
<div class="r" style="left:102.40px;top:215.18px;width:914.80px;height:0.80px;background:#d2d2d2;"></div>
<div class="r" style="left:102.40px;top:225.34px;width:914.80px;height:0.80px;background:#d2d2d2;"></div>
<div class="r" style="left:102.40px;top:235.49px;width:914.80px;height:0.80px;background:#d2d2d2;"></div>
<div class="r" style="left:102.40px;top:245.65px;width:914.80px;height:0.80px;background:#d2d2d2;"></div>
<div class="r" style="left:102.40px;top:255.80px;width:914.80px;height:0.80px;background:#d2d2d2;"></div>
<div class="r" style="left:108.10px;top:124.20px;width:0.80px;height:132.00px;background:#cdcdcd;"></div>
<div class="r" style="left:156.90px;top:124.20px;width:0.80px;height:132.00px;background:#cdcdcd;"></div>
<div class="r" style="left:211.10px;top:124.20px;width:0.80px;height:132.00px;background:#cdcdcd;"></div>
<div class="r" style="left:256.10px;top:124.20px;width:0.80px;height:132.00px;background:#cdcdcd;"></div>
<div class="r" style="left:304.20px;top:124.20px;width:0.80px;height:132.00px;background:#cdcdcd;"></div>
<div class="r" style="left:317.20px;top:124.20px;width:0.80px;height:132.00px;background:#cdcdcd;"></div>
<div class="r" style="left:330.40px;top:124.20px;width:0.80px;height:132.00px;background:#cdcdcd;"></div>
<div class="r" style="left:447.80px;top:124.20px;width:0.80px;height:132.00px;background:#cdcdcd;"></div>
<div class="r" style="left:607.80px;top:124.20px;width:0.80px;height:132.00px;background:#cdcdcd;"></div>
<div class="r" style="left:732.80px;top:124.20px;width:0.80px;height:132.00px;background:#cdcdcd;"></div>
<div class="r" style="left:870.60px;top:124.20px;width:0.80px;height:132.00px;background:#cdcdcd;"></div>
<div class="r" style="left:923.90px;top:124.20px;width:0.80px;height:132.00px;background:#cdcdcd;"></div>
<div class="r" style="left:996.30px;top:124.20px;width:0.80px;height:132.00px;background:#cdcdcd;"></div>
<div class="r" style="left:108.50px;top:123.70px;width:908.70px;height:0.60px;background:#ead8cc;"></div>
<div class="r" style="left:156.90px;top:124.80px;width:0.80px;height:8.95px;background:#58bdf8;"></div>
<div class="r" style="left:211.10px;top:124.80px;width:0.80px;height:8.95px;background:#58bdf8;"></div>
<div class="r" style="left:256.10px;top:124.80px;width:0.80px;height:8.95px;background:#58bdf8;"></div>
<div class="r" style="left:304.20px;top:124.80px;width:0.80px;height:8.95px;background:#58bdf8;"></div>
<div class="r" style="left:317.20px;top:124.80px;width:0.80px;height:8.95px;background:#58bdf8;"></div>
<div class="r" style="left:330.40px;top:124.80px;width:0.80px;height:8.95px;background:#58bdf8;"></div>
<div class="r" style="left:447.80px;top:124.80px;width:0.80px;height:8.95px;background:#58bdf8;"></div>
<div class="r" style="left:607.80px;top:124.80px;width:0.80px;height:8.95px;background:#58bdf8;"></div>
<div class="r" style="left:732.80px;top:124.80px;width:0.80px;height:8.95px;background:#58bdf8;"></div>
<div class="r" style="left:870.60px;top:124.80px;width:0.80px;height:8.95px;background:#58bdf8;"></div>
<div class="r" style="left:923.90px;top:124.80px;width:0.80px;height:8.95px;background:#58bdf8;"></div>
<div class="r" style="left:996.30px;top:124.80px;width:0.80px;height:8.95px;background:#58bdf8;"></div>
<span class="t " style="left:114.21px;top:126.49px;font-size:5.65px;line-height:6.78px;color:#fff;transform:scaleY(1.120);">EMB00000037</span>
<span class="t " style="left:172.15px;top:126.49px;font-size:5.65px;line-height:6.78px;color:#fff;transform:scaleY(1.120);">Solicitado</span>
<span class="t " style="left:219.86px;top:126.49px;font-size:5.65px;line-height:6.78px;color:#fff;transform:scaleY(1.120);">19/03/2015</span>
<span class="t " style="left:332.10px;top:126.49px;font-size:5.65px;line-height:6.78px;color:#fff;transform:scaleY(1.120);">De Colima A México D.F.</span>
<span class="t " style="left:449.50px;top:126.49px;font-size:5.65px;line-height:6.78px;color:#fff;transform:scaleY(1.120);">Agua de San Luis Potosi, S.A. de C.V.</span>
<span class="t " style="left:609.50px;top:126.49px;font-size:5.65px;line-height:6.78px;color:#fff;transform:scaleY(1.120);">Almacenes de Colima</span>
<span class="t " style="left:734.50px;top:126.49px;font-size:5.65px;line-height:6.78px;color:#fff;transform:scaleY(1.120);">Alimentos Básicos del Norte S.A. de C.V.</span>
<span class="t " style="left:114.21px;top:136.64px;font-size:5.65px;line-height:6.78px;color:#383838;transform:scaleY(1.120);">EMB00000035</span>
<span class="t " style="left:172.15px;top:136.64px;font-size:5.65px;line-height:6.78px;color:#383838;transform:scaleY(1.120);">Solicitado</span>
<span class="t " style="left:219.86px;top:136.64px;font-size:5.65px;line-height:6.78px;color:#383838;transform:scaleY(1.120);">03/12/2012</span>
<span class="t " style="left:332.10px;top:136.64px;font-size:5.65px;line-height:6.78px;color:#383838;transform:scaleY(1.120);">De Colima A México D.F.</span>
<span class="t " style="left:449.50px;top:136.64px;font-size:5.65px;line-height:6.78px;color:#383838;transform:scaleY(1.120);">Almacenes de Colima</span>
<span class="t " style="left:609.50px;top:136.64px;font-size:5.65px;line-height:6.78px;color:#383838;transform:scaleY(1.120);">Almacenes de Colima</span>
<span class="t " style="left:734.50px;top:136.64px;font-size:5.65px;line-height:6.78px;color:#383838;transform:scaleY(1.120);">Alimentos Básicos del Norte S.A. de C.V.</span>
<span class="t " style="left:114.21px;top:146.79px;font-size:5.65px;line-height:6.78px;color:#383838;transform:scaleY(1.120);">EMB00000034</span>
<span class="t " style="left:172.15px;top:146.79px;font-size:5.65px;line-height:6.78px;color:#383838;transform:scaleY(1.120);">Solicitado</span>
<span class="t " style="left:219.86px;top:146.79px;font-size:5.65px;line-height:6.78px;color:#383838;transform:scaleY(1.120);">03/12/2012</span>
<span class="t " style="left:332.10px;top:146.79px;font-size:5.65px;line-height:6.78px;color:#383838;transform:scaleY(1.120);">De Guadalajara A México D.F.</span>
<span class="t " style="left:449.50px;top:146.79px;font-size:5.65px;line-height:6.78px;color:#383838;transform:scaleY(1.120);">Alimentos Básicos del Centro A.C.</span>
<span class="t " style="left:609.50px;top:146.79px;font-size:5.65px;line-height:6.78px;color:#383838;transform:scaleY(1.120);">Almacenes de Colima</span>
<span class="t " style="left:734.50px;top:146.79px;font-size:5.65px;line-height:6.78px;color:#383838;transform:scaleY(1.120);">Andres Pichardo Godinez</span>
<span class="t " style="left:114.21px;top:156.95px;font-size:5.65px;line-height:6.78px;color:#383838;transform:scaleY(1.120);">EMB00000023</span>
<span class="t " style="left:172.15px;top:156.95px;font-size:5.65px;line-height:6.78px;color:#383838;transform:scaleY(1.120);">Solicitado</span>
<span class="t " style="left:219.86px;top:156.95px;font-size:5.65px;line-height:6.78px;color:#383838;transform:scaleY(1.120);">06/03/2012</span>
<span class="t " style="left:332.10px;top:156.95px;font-size:5.65px;line-height:6.78px;color:#383838;transform:scaleY(1.120);">De Guadalajara A México D.F.</span>
<span class="t " style="left:449.50px;top:156.95px;font-size:5.65px;line-height:6.78px;color:#383838;transform:scaleY(1.120);">Almacenes Imperial</span>
<span class="t " style="left:609.50px;top:156.95px;font-size:5.65px;line-height:6.78px;color:#383838;transform:scaleY(1.120);">Agua de San Luis Potosi, S.A. de C.V.</span>
<span class="t " style="left:734.50px;top:156.95px;font-size:5.65px;line-height:6.78px;color:#383838;transform:scaleY(1.120);">Almacenes Imperial</span>
<span class="t " style="left:114.21px;top:167.10px;font-size:5.65px;line-height:6.78px;color:#383838;transform:scaleY(1.120);">EMB00000021</span>
<span class="t " style="left:172.15px;top:167.10px;font-size:5.65px;line-height:6.78px;color:#383838;transform:scaleY(1.120);">Solicitado</span>
<span class="t " style="left:220.07px;top:167.10px;font-size:5.65px;line-height:6.78px;color:#383838;transform:scaleY(1.120);">06/07/2011</span>
<span class="t " style="left:275.52px;top:167.10px;font-size:5.65px;line-height:6.78px;color:#383838;transform:scaleY(1.120);">A72</span>
<span class="t " style="left:332.10px;top:167.10px;font-size:5.65px;line-height:6.78px;color:#383838;transform:scaleY(1.120);">De Hidalgo A México D.F.</span>
<span class="t " style="left:449.50px;top:167.10px;font-size:5.65px;line-height:6.78px;color:#383838;transform:scaleY(1.120);">Soft 2, S.A. de C.V.</span>
<span class="t " style="left:609.50px;top:167.10px;font-size:5.65px;line-height:6.78px;color:#383838;transform:scaleY(1.120);">Soft 2, S.A. de C.V.</span>
<span class="t " style="left:734.50px;top:167.10px;font-size:5.65px;line-height:6.78px;color:#383838;transform:scaleY(1.120);">Distribuidores de Morelia</span>
<span class="t " style="left:114.21px;top:177.26px;font-size:5.65px;line-height:6.78px;color:#383838;transform:scaleY(1.120);">EMB00000020</span>
<span class="t " style="left:172.15px;top:177.26px;font-size:5.65px;line-height:6.78px;color:#383838;transform:scaleY(1.120);">Solicitado</span>
<span class="t " style="left:220.07px;top:177.26px;font-size:5.65px;line-height:6.78px;color:#383838;transform:scaleY(1.120);">05/07/2011</span>
<span class="t " style="left:332.10px;top:177.26px;font-size:5.65px;line-height:6.78px;color:#383838;transform:scaleY(1.120);">De Colima A México D.F.</span>
<span class="t " style="left:609.50px;top:177.26px;font-size:5.65px;line-height:6.78px;color:#383838;transform:scaleY(1.120);">Refacciones Automotrices de Ecatepec</span>
<span class="t " style="left:734.50px;top:177.26px;font-size:5.65px;line-height:6.78px;color:#383838;transform:scaleY(1.120);">Alimentos Básicos del Centro A.C.</span>
<span class="t " style="left:114.21px;top:187.41px;font-size:5.65px;line-height:6.78px;color:#383838;transform:scaleY(1.120);">EMB00000019</span>
<span class="t " style="left:172.15px;top:187.41px;font-size:5.65px;line-height:6.78px;color:#383838;transform:scaleY(1.120);">Solicitado</span>
<span class="t " style="left:220.07px;top:187.41px;font-size:5.65px;line-height:6.78px;color:#383838;transform:scaleY(1.120);">18/05/2011</span>
<span class="t " style="left:332.10px;top:187.41px;font-size:5.65px;line-height:6.78px;color:#383838;transform:scaleY(1.120);">Colima-México</span>
<span class="t " style="left:609.50px;top:187.41px;font-size:5.65px;line-height:6.78px;color:#383838;transform:scaleY(1.120);">Almacenes Imperial</span>
<span class="t " style="left:734.50px;top:187.41px;font-size:5.65px;line-height:6.78px;color:#383838;transform:scaleY(1.120);">Armadora de Acero Continental S.A. de C.V.</span>
<span class="t " style="left:114.21px;top:197.56px;font-size:5.65px;line-height:6.78px;color:#383838;transform:scaleY(1.120);">EMB00000016</span>
<span class="t " style="left:172.15px;top:197.56px;font-size:5.65px;line-height:6.78px;color:#383838;transform:scaleY(1.120);">Solicitado</span>
<span class="t " style="left:220.07px;top:197.56px;font-size:5.65px;line-height:6.78px;color:#383838;transform:scaleY(1.120);">02/03/2011</span>
<span class="t " style="left:275.52px;top:197.56px;font-size:5.65px;line-height:6.78px;color:#383838;transform:scaleY(1.120);">A12</span>
<span class="t " style="left:332.10px;top:197.56px;font-size:5.65px;line-height:6.78px;color:#383838;transform:scaleY(1.120);">México-Estado de México</span>
<span class="t " style="left:449.50px;top:197.56px;font-size:5.65px;line-height:6.78px;color:#383838;transform:scaleY(1.120);">Distribuidora de materiales</span>
<span class="t " style="left:609.50px;top:197.56px;font-size:5.65px;line-height:6.78px;color:#383838;transform:scaleY(1.120);">Distribuidora de materiales</span>
<span class="t " style="left:734.50px;top:197.56px;font-size:5.65px;line-height:6.78px;color:#383838;transform:scaleY(1.120);">Distribuidora de Medicamentos del Bajio</span>
<span class="t " style="left:114.21px;top:207.72px;font-size:5.65px;line-height:6.78px;color:#383838;transform:scaleY(1.120);">EMB00000014</span>
<span class="t " style="left:172.15px;top:207.72px;font-size:5.65px;line-height:6.78px;color:#383838;transform:scaleY(1.120);">Solicitado</span>
<span class="t " style="left:220.07px;top:207.72px;font-size:5.65px;line-height:6.78px;color:#383838;transform:scaleY(1.120);">02/03/2011</span>
<span class="t " style="left:275.52px;top:207.72px;font-size:5.65px;line-height:6.78px;color:#383838;transform:scaleY(1.120);">A19</span>
<span class="t " style="left:332.10px;top:207.72px;font-size:5.65px;line-height:6.78px;color:#383838;transform:scaleY(1.120);">México-Chiapas</span>
<span class="t " style="left:449.50px;top:207.72px;font-size:5.65px;line-height:6.78px;color:#383838;transform:scaleY(1.120);">Bodegas de Insumos de Monterrey</span>
<span class="t " style="left:609.50px;top:207.72px;font-size:5.65px;line-height:6.78px;color:#383838;transform:scaleY(1.120);">Cervezas Cuauhtémoc Moctezuma S.A. de C.V.</span>
<span class="t " style="left:734.50px;top:207.72px;font-size:5.65px;line-height:6.78px;color:#383838;transform:scaleY(1.120);">Bodegas de Insumos de Monterrey</span>
<span class="t " style="left:114.21px;top:217.87px;font-size:5.65px;line-height:6.78px;color:#383838;transform:scaleY(1.120);">EMB00000012</span>
<span class="t " style="left:172.15px;top:217.87px;font-size:5.65px;line-height:6.78px;color:#383838;transform:scaleY(1.120);">Solicitado</span>
<span class="t " style="left:220.07px;top:217.87px;font-size:5.65px;line-height:6.78px;color:#383838;transform:scaleY(1.120);">02/03/2011</span>
<span class="t " style="left:277.09px;top:217.87px;font-size:5.65px;line-height:6.78px;color:#383838;transform:scaleY(1.120);">A7</span>
<span class="t " style="left:332.10px;top:217.87px;font-size:5.65px;line-height:6.78px;color:#383838;transform:scaleY(1.120);">León-Manzanillo</span>
<span class="t " style="left:449.50px;top:217.87px;font-size:5.65px;line-height:6.78px;color:#383838;transform:scaleY(1.120);">Distribuidores de Morelia</span>
<span class="t " style="left:609.50px;top:217.87px;font-size:5.65px;line-height:6.78px;color:#383838;transform:scaleY(1.120);">Distribuidores de Morelia</span>
<span class="t " style="left:734.50px;top:217.87px;font-size:5.65px;line-height:6.78px;color:#383838;transform:scaleY(1.120);">Bebidas del Centro</span>
<span class="t " style="left:114.21px;top:228.03px;font-size:5.65px;line-height:6.78px;color:#383838;transform:scaleY(1.120);">EMB00000009</span>
<span class="t " style="left:172.15px;top:228.03px;font-size:5.65px;line-height:6.78px;color:#383838;transform:scaleY(1.120);">Solicitado</span>
<span class="t " style="left:220.07px;top:228.03px;font-size:5.65px;line-height:6.78px;color:#383838;transform:scaleY(1.120);">01/03/2011</span>
<span class="t " style="left:275.52px;top:228.03px;font-size:5.65px;line-height:6.78px;color:#383838;transform:scaleY(1.120);">A14</span>
<span class="t " style="left:332.10px;top:228.03px;font-size:5.65px;line-height:6.78px;color:#383838;transform:scaleY(1.120);">Hidalgo-Toluca</span>
<span class="t " style="left:449.50px;top:228.03px;font-size:5.65px;line-height:6.78px;color:#383838;transform:scaleY(1.120);">Refacciones Automotrices de Ecatepec</span>
<span class="t " style="left:609.50px;top:228.03px;font-size:5.65px;line-height:6.78px;color:#383838;transform:scaleY(1.120);">Refacciones Automotrices de Ecatepec</span>
<span class="t " style="left:734.50px;top:228.03px;font-size:5.65px;line-height:6.78px;color:#383838;transform:scaleY(1.120);">Horacio Herrera Gonzalez</span>
<span class="t " style="left:114.21px;top:238.18px;font-size:5.65px;line-height:6.78px;color:#383838;transform:scaleY(1.120);">EMB00000008</span>
<span class="t " style="left:172.15px;top:238.18px;font-size:5.65px;line-height:6.78px;color:#383838;transform:scaleY(1.120);">Solicitado</span>
<span class="t " style="left:220.07px;top:238.18px;font-size:5.65px;line-height:6.78px;color:#383838;transform:scaleY(1.120);">01/03/2011</span>
<span class="t " style="left:332.10px;top:238.18px;font-size:5.65px;line-height:6.78px;color:#383838;transform:scaleY(1.120);">Izcalli-Celaya</span>
<span class="t " style="left:449.50px;top:238.18px;font-size:5.65px;line-height:6.78px;color:#383838;transform:scaleY(1.120);">Telares Estrella de Occidente</span>
<span class="t " style="left:609.50px;top:238.18px;font-size:5.65px;line-height:6.78px;color:#383838;transform:scaleY(1.120);">Telares Estrella de Occidente</span>
<span class="t " style="left:734.50px;top:238.18px;font-size:5.65px;line-height:6.78px;color:#383838;transform:scaleY(1.120);">Industrias Centauro</span>
<span class="t " style="left:114.21px;top:248.33px;font-size:5.65px;line-height:6.78px;color:#383838;transform:scaleY(1.120);">EMB00000007</span>
<span class="t " style="left:172.15px;top:248.33px;font-size:5.65px;line-height:6.78px;color:#383838;transform:scaleY(1.120);">Solicitado</span>
<span class="t " style="left:220.07px;top:248.33px;font-size:5.65px;line-height:6.78px;color:#383838;transform:scaleY(1.120);">01/03/2011</span>
<span class="t " style="left:332.10px;top:248.33px;font-size:5.65px;line-height:6.78px;color:#383838;transform:scaleY(1.120);">Hidalgo-Toluca</span>
<span class="t " style="left:449.50px;top:248.33px;font-size:5.65px;line-height:6.78px;color:#383838;transform:scaleY(1.120);">Armadora de Acero Continental S.A. de C.V.</span>
<span class="t " style="left:609.50px;top:248.33px;font-size:5.65px;line-height:6.78px;color:#383838;transform:scaleY(1.120);">Distribuidora de Medicamentos del Bajio</span>
<span class="t " style="left:734.50px;top:248.33px;font-size:5.65px;line-height:6.78px;color:#383838;transform:scaleY(1.120);">Arrendadora Centro Sur S.A. de C.V.</span>
<svg class="r" style="left:104.60px;top:127.70px" width="2" height="3" viewBox="0 0 2 3"><path d="M0 0L1.800 1.500 0 3z" fill="#222"/></svg>
<svg class="r" style="left:319.80px;top:125.40px" width="8" height="8.4" viewBox="0 0 8 8.4"><rect x=".4" y="1" width="4.600" height="5.400" fill="#f4f6fb" stroke="#c8d0e4" stroke-width=".4"/><rect x="2.600" y="2.200" width="5" height="5.800" fill="#f6d45a"/><path d="M2.600 7h5v1h-5z" fill="#e0a830"/><path d="M3.600 1.200v3.200a1 1 0 0 0 2 0V.9" stroke="#1e3ea0" stroke-width=".8" fill="none"/></svg>
<div class="r" style="left:102.40px;top:517.00px;width:914.80px;height:0.80px;background:#d0d0d0;"></div>
<div class="r" style="left:112.00px;top:520.00px;width:684.00px;height:3.80px;background:#bdbdbd;"></div>
<svg class="r" style="left:106.00px;top:520.40px" width="2.2" height="3" viewBox="0 0 2.2 3"><path d="M2 0L0 1.500 2 3z" fill="#555"/></svg>
<svg class="r" style="left:1011.50px;top:520.40px" width="2.2" height="3" viewBox="0 0 2.2 3"><path d="M0 0L2 1.500 0 3z" fill="#555"/></svg>
<span class="t " style="left:110.50px;top:531.76px;font-size:5.90px;line-height:7.08px;color:#3a3a3a;letter-spacing:-0.043px;transform:scaleY(1.100);">Total 13 Registros</span>
<span class="t " style="left:57.00px;top:545.78px;font-size:5.70px;line-height:6.84px;color:#444;letter-spacing:-0.030px;transform:scaleY(1.100);">Empresa: Empresa ACME, S.A. de C.V.</span>
<span class="t " style="left:245.00px;top:545.78px;font-size:5.70px;line-height:6.84px;color:#444;letter-spacing:0.061px;transform:scaleY(1.100);">Administrador: Soporte()</span>
<span class="t " style="left:396.60px;top:545.72px;font-size:5.80px;line-height:6.96px;color:#444;letter-spacing:-0.121px;transform:scaleY(1.100);">Access 2000</span>
<div class="r" style="left:53.40px;top:544.60px;width:0.70px;height:8.40px;background:#cfcfcf;"></div>
<div class="r" style="left:242.30px;top:544.60px;width:0.70px;height:8.40px;background:#cfcfcf;"></div>
<div class="r" style="left:394.40px;top:544.60px;width:0.70px;height:8.40px;background:#cfcfcf;"></div>
<div class="r" style="left:440.30px;top:544.60px;width:0.70px;height:8.40px;background:#cfcfcf;"></div>
<div class="r" style="left:469.40px;top:544.60px;width:0.70px;height:8.40px;background:#cfcfcf;"></div>
<div class="r" style="left:498.60px;top:544.60px;width:0.70px;height:8.40px;background:#cfcfcf;"></div>
<div class="r" style="left:568.20px;top:544.60px;width:0.70px;height:8.40px;background:#cfcfcf;"></div>
<span class="t " style="left:501.50px;top:546.02px;font-size:5.30px;line-height:6.36px;color:#b8b8b8;letter-spacing:-0.478px;">CAPS</span>
<span class="t " style="left:519.50px;top:546.02px;font-size:5.30px;line-height:6.36px;color:#2a2a3a;letter-spacing:-0.285px;">NUM</span>
<span class="t " style="left:536.00px;top:546.02px;font-size:5.30px;line-height:6.36px;color:#b8b8b8;letter-spacing:-0.379px;">SCRL</span>
<span class="t " style="left:555.50px;top:546.02px;font-size:5.30px;line-height:6.36px;color:#b8b8b8;letter-spacing:-0.168px;">INS</span>
<div class="r" style="left:0.00px;top:554.30px;width:1024.00px;height:5.00px;background:#0e0e0e;"></div>
<div class="r" style="left:25.00px;top:554.30px;width:184.00px;height:5.00px;background:#2d2d2d;"></div>
<div class="r" style="left:340.00px;top:554.30px;width:25.50px;height:5.00px;background:#2d2d2d;"></div>
<div class="r" style="left:1018.00px;top:554.30px;width:0.60px;height:5.00px;background:#555;"></div>
<span class="t " style="left:984.00px;top:556.24px;font-size:5.60px;line-height:6.72px;color:#eee;letter-spacing:0.497px;">13:00</span>
</div>
</body></html>
